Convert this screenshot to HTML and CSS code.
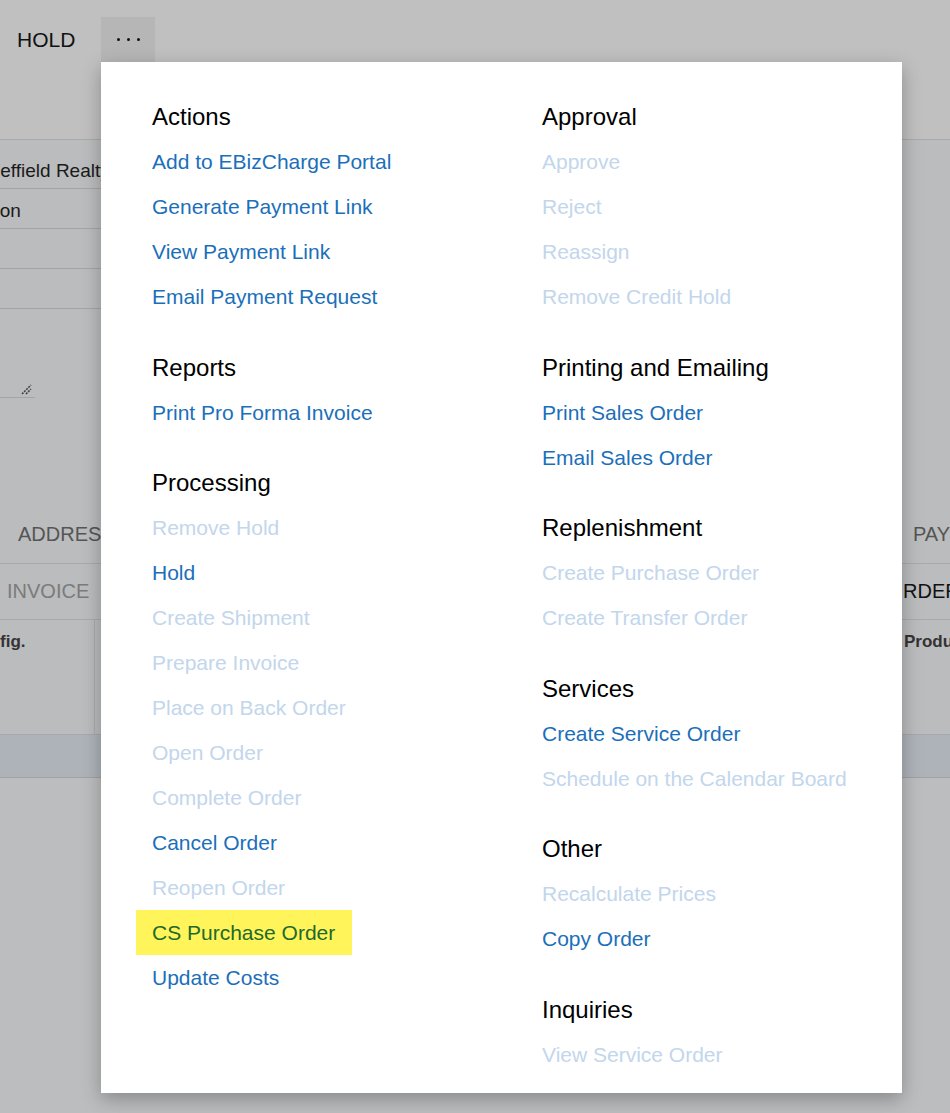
FILE: index.html
```html
<!DOCTYPE html>
<html>
<head>
<meta charset="utf-8">
<link rel="stylesheet" href="styles.css">
</head>
<body>
<div class="page">
  <div class="toolbar">
    <span class="tb-btn">HOLD</span>
    <span class="tb-more"><span class="dot"></span><span class="dot"></span><span class="dot"></span></span>
  </div>
  <div class="content">
    <div class="form">
      <div class="field"><span class="cut">Sheffield Realty</span></div>
      <div class="field"><span class="cut2">Location</span></div>
      <div class="field"></div>
      <div class="field"></div>
      <div class="textarea">
        <svg class="resize" width="12" height="12" viewBox="0 0 12 12"><path d="M1 11 L10 2 M5 11 L10 6" stroke="#444" stroke-width="1.6" stroke-dasharray="2 1"/></svg>
      </div>
    </div>
    <div class="tabs">
      <span class="tab">ADDRESSES</span>
      <span class="tab right">PAYMENTS</span>
    </div>
    <div class="subtabs">
      <span class="subtab">INVOICE</span>
      <span class="subtab dark">RDERS</span>
    </div>
    <div class="grid-head">
      <span class="col first">fig.</span>
      <span class="col right">Product</span>
    </div>
    <div class="grid-row"></div>
  </div>

  <div class="menu">
    <div class="menu-col">
      <div class="section">
        <div class="head">Actions</div>
        <div class="item">Add to EBizCharge Portal</div>
        <div class="item">Generate Payment Link</div>
        <div class="item">View Payment Link</div>
        <div class="item">Email Payment Request</div>
      </div>
      <div class="section">
        <div class="head">Reports</div>
        <div class="item">Print Pro Forma Invoice</div>
      </div>
      <div class="section">
        <div class="head">Processing</div>
        <div class="item off">Remove Hold</div>
        <div class="item">Hold</div>
        <div class="item off">Create Shipment</div>
        <div class="item off">Prepare Invoice</div>
        <div class="item off">Place on Back Order</div>
        <div class="item off">Open Order</div>
        <div class="item off">Complete Order</div>
        <div class="item">Cancel Order</div>
        <div class="item off">Reopen Order</div>
        <div class="item"><span class="hl">CS Purchase Order</span></div>
        <div class="item">Update Costs</div>
      </div>
    </div>
    <div class="menu-col">
      <div class="section">
        <div class="head">Approval</div>
        <div class="item off">Approve</div>
        <div class="item off">Reject</div>
        <div class="item off">Reassign</div>
        <div class="item off">Remove Credit Hold</div>
      </div>
      <div class="section">
        <div class="head">Printing and Emailing</div>
        <div class="item">Print Sales Order</div>
        <div class="item">Email Sales Order</div>
      </div>
      <div class="section">
        <div class="head">Replenishment</div>
        <div class="item off">Create Purchase Order</div>
        <div class="item off">Create Transfer Order</div>
      </div>
      <div class="section">
        <div class="head">Services</div>
        <div class="item">Create Service Order</div>
        <div class="item off">Schedule on the Calendar Board</div>
      </div>
      <div class="section">
        <div class="head">Other</div>
        <div class="item off">Recalculate Prices</div>
        <div class="item">Copy Order</div>
      </div>
      <div class="section">
        <div class="head">Inquiries</div>
        <div class="item off">View Service Order</div>
      </div>
    </div>
  </div>
</div>
</body>
</html>
```

FILE: styles.css
```css
html, body {
  margin: 0;
  padding: 0;
}
body {
  width: 950px;
  height: 1113px;
  overflow: hidden;
  background: #bcbdbe;
  font-family: "Liberation Sans", Arial, sans-serif;
}
.page {
  position: relative;
  width: 950px;
  height: 1113px;
  overflow: hidden;
}
.toolbar {
  height: 140px;
  box-sizing: border-box;
  background: #c0c0c0;
  border-bottom: 1px solid #a9a9a9;
  display: flex;
  align-items: flex-start;
}
.tb-btn {
  margin-top: 17px;
  height: 45px;
  line-height: 45px;
  padding: 0 26px 0 17px;
  font-size: 21px;
  color: #111;
}
.tb-more {
  margin-top: 17px;
  width: 54px;
  height: 45px;
  background: #b6b6b6;
  display: flex;
  align-items: center;
  justify-content: center;
  gap: 7px;
}
.dot {
  width: 3px;
  height: 3px;
  border-radius: 50%;
  background: #111;
}
.content {
  background: #bbbcbd;
}
.form {
  width: 110px;
  padding-top: 9px;
}
.field {
  height: 40px;
  border-bottom: 1px solid #a4a5a6;
  box-sizing: border-box;
  font-size: 19px;
  color: #1a1a1a;
  line-height: 44px;
  white-space: nowrap;
  overflow: hidden;
}
.cut {
  display: inline-block;
  margin-left: -23px;
}
.cut2 {
  display: inline-block;
  margin-left: -51px;
}
.textarea {
  width: 35px;
  height: 88px;
  border-bottom: 1px solid #a4a5a6;
  position: relative;
}
.resize {
  position: absolute;
  right: 2px;
  bottom: 2px;
}
.tabs {
  margin-top: 113px;
  height: 53px;
  box-sizing: border-box;
  padding-bottom: 6px;
  border-bottom: 1px solid #a9aaab;
  display: flex;
  justify-content: space-between;
  align-items: center;
  white-space: nowrap;
  font-size: 20px;
  color: #555;
}
.tab {
  padding-left: 18px;
}
.tab.right {
  flex: 0 0 37px;
  padding-left: 0;
  overflow: hidden;
}
.subtabs {
  height: 56px;
  box-sizing: border-box;
  border-bottom: 1px solid #a9aaab;
  display: flex;
  justify-content: space-between;
  align-items: center;
  white-space: nowrap;
  font-size: 20px;
  color: #7a7b7c;
}
.subtab {
  padding-left: 7px;
}
.subtab.dark {
  color: #111;
  padding-left: 0;
  flex: 0 0 47px;
  overflow: hidden;
}
.grid-head {
  height: 114px;
  display: flex;
  justify-content: space-between;
  align-items: flex-start;
  font-size: 17px;
  font-weight: bold;
  color: #333;
  white-space: nowrap;
}
.col.first {
  width: 95px;
  height: 114px;
  border-right: 1px solid #a9aaab;
  box-sizing: border-box;
  padding-top: 12px;
}
.col.right {
  padding-top: 12px;
  flex: 0 0 46px;
  overflow: hidden;
}
.grid-row {
  height: 42px;
  background: #aeb3ba;
  border-top: 1px solid #a5a9ae;
  border-bottom: 1px solid #9fa1a3;
}

.menu {
  position: absolute;
  left: 101px;
  top: 62px;
  width: 801px;
  height: 1031px;
  box-sizing: border-box;
  background: #fff;
  box-shadow: 0 6px 18px rgba(0, 0, 0, 0.28);
  padding: 32px 0 0 51px;
  display: grid;
  grid-template-columns: 390px 1fr;
  align-items: start;
}
.section {
  margin-bottom: 25.5px;
}
.head {
  height: 45px;
  line-height: 45px;
  font-size: 24px;
  color: #000;
  white-space: nowrap;
}
.item {
  height: 45px;
  line-height: 45px;
  font-size: 21px;
  color: #1b6fba;
  white-space: nowrap;
}
.item.off {
  color: #c2d6ec;
}
.hl {
  display: inline-block;
  margin-left: -16px;
  padding: 0 17px 0 16px;
  background: #fff55a;
  color: #22692d;
}
```
